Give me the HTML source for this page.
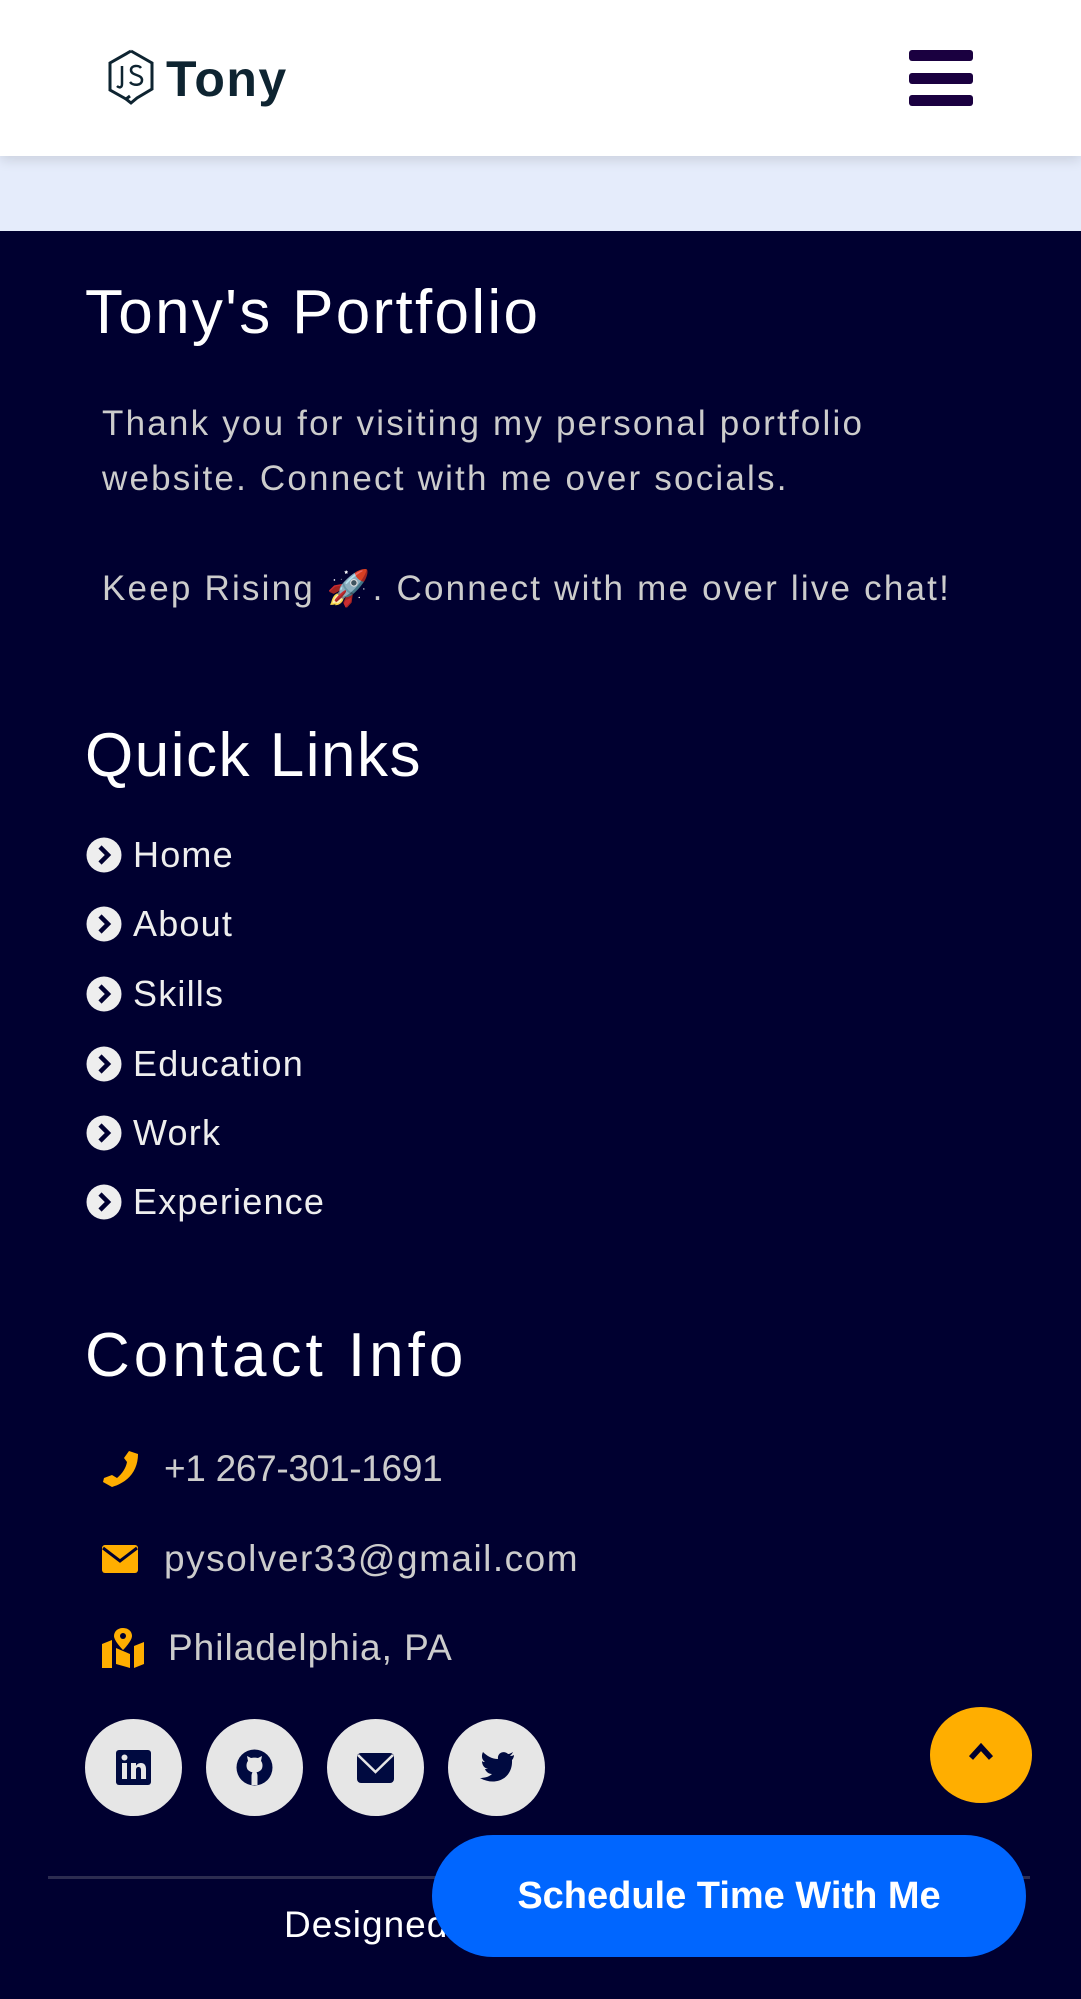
<!DOCTYPE html>
<html><head><meta charset="utf-8"><style>
*{margin:0;padding:0;box-sizing:border-box}
body{width:1081px;height:1999px;overflow:hidden;background:#000030;font-family:"Liberation Sans",sans-serif;position:relative}
.hdr{position:absolute;left:0;top:0;width:1081px;height:156px;background:#fff;box-shadow:0 4px 12px rgba(0,0,0,.12);z-index:2}
.band{position:absolute;left:0;top:156px;width:1081px;height:75px;background:#e5ecfb}
.abs{position:absolute}
h2{position:absolute;left:85px;color:#fff;font-weight:normal;font-size:62px;line-height:1;letter-spacing:1.5px;white-space:nowrap}
p.t{position:absolute;left:102px;color:#ccc;font-size:35px;line-height:55px;width:970px;letter-spacing:2.2px;white-space:nowrap}
.ql{position:absolute;left:86px;color:#eee;font-size:36px;height:36px;line-height:36px;letter-spacing:1.2px}
.ql svg{position:absolute;left:0;top:0}
.ql span{position:absolute;left:47px;white-space:nowrap}
.ci{position:absolute;left:102px;color:#ccc;font-size:37px;line-height:40px;height:40px;letter-spacing:1px}
.ci span{position:absolute;white-space:nowrap;top:0}
.soc{position:absolute;top:1719px;width:97px;height:97px;border-radius:50%;background:#e6e6e6}
.soc svg{position:absolute;left:28px;top:28px}
</style></head><body>
<div class="hdr">
<svg class="abs" style="left:106px;top:48px" width="50" height="60" viewBox="0 0 50 60"><path d="M25 3 L46 15 L46 41 L31 50 L25 55 L20 51 L24 48" fill="none" stroke="#0e2431" stroke-width="3"/><path d="M20 51 L4 42 L4 15 L25 3" fill="none" stroke="#0e2431" stroke-width="3"/><path d="M16 18 V36 C16 40 13 40 11 38" fill="none" stroke="#0e2431" stroke-width="2.5"/><path d="M35 20 C33 17 25 17 25 22 C25 28 36 26 36 32 C36 38 27 38 24 34" fill="none" stroke="#0e2431" stroke-width="2.5"/></svg>
<div class="abs" style="left:166px;top:50px;font-size:50px;font-weight:bold;color:#0e2431;letter-spacing:1.5px">Tony</div>
<div class="abs" style="left:909px;top:50px;width:64px;height:11px;border-radius:3px;background:#1a0040"></div>
<div class="abs" style="left:909px;top:73px;width:64px;height:11px;border-radius:3px;background:#1a0040"></div>
<div class="abs" style="left:909px;top:95px;width:64px;height:11px;border-radius:3px;background:#1a0040"></div>
</div>
<div class="band"></div>
<h2 style="top:282px;letter-spacing:2.3px">Tony's Portfolio</h2>
<p class="t" style="top:396px">Thank you for visiting my personal portfolio<br>website. Connect with me over socials.</p>
<p class="t" style="top:561px">Keep Rising 🚀. Connect with me over live chat!</p>
<h2 style="top:725px">Quick Links</h2>
<div class="ql" style="top:837px"><svg width="36" height="36" viewBox="0 0 36 36"><circle cx="18" cy="18" r="17.5" fill="#eee"/><path d="M14 10 L22 18 L14 26" fill="none" stroke="#000030" stroke-width="4.5"/></svg><span>Home</span></div>
<div class="ql" style="top:906px"><svg width="36" height="36" viewBox="0 0 36 36"><circle cx="18" cy="18" r="17.5" fill="#eee"/><path d="M14 10 L22 18 L14 26" fill="none" stroke="#000030" stroke-width="4.5"/></svg><span>About</span></div>
<div class="ql" style="top:976px"><svg width="36" height="36" viewBox="0 0 36 36"><circle cx="18" cy="18" r="17.5" fill="#eee"/><path d="M14 10 L22 18 L14 26" fill="none" stroke="#000030" stroke-width="4.5"/></svg><span>Skills</span></div>
<div class="ql" style="top:1046px"><svg width="36" height="36" viewBox="0 0 36 36"><circle cx="18" cy="18" r="17.5" fill="#eee"/><path d="M14 10 L22 18 L14 26" fill="none" stroke="#000030" stroke-width="4.5"/></svg><span>Education</span></div>
<div class="ql" style="top:1115px"><svg width="36" height="36" viewBox="0 0 36 36"><circle cx="18" cy="18" r="17.5" fill="#eee"/><path d="M14 10 L22 18 L14 26" fill="none" stroke="#000030" stroke-width="4.5"/></svg><span>Work</span></div>
<div class="ql" style="top:1184px"><svg width="36" height="36" viewBox="0 0 36 36"><circle cx="18" cy="18" r="17.5" fill="#eee"/><path d="M14 10 L22 18 L14 26" fill="none" stroke="#000030" stroke-width="4.5"/></svg><span>Experience</span></div>
<h2 style="top:1325px;letter-spacing:4px">Contact Info</h2>
<div class="ci" style="top:1449px"><svg class="abs" style="left:0;top:1px" width="37" height="37" viewBox="0 0 37 37"><path d="M27 1 L36 4 C36 20 27 32 10 37 L1 32 L2 28 L10 25 L15 28 C20 24 24 18 25 12 L22 8 Z" fill="#ffae00"/></svg><span style="left:62px;letter-spacing:-0.3px">+1 267-301-1691</span></div>
<div class="ci" style="top:1539px"><svg class="abs" style="left:0;top:6px" width="36" height="28" viewBox="0 0 36 28"><rect x="0" y="0" width="36" height="28" rx="3" fill="#ffae00"/><path d="M1 3 L18 16 L35 3" fill="none" stroke="#000030" stroke-width="3"/></svg><span style="left:62px;letter-spacing:1.5px">pysolver33@gmail.com</span></div>
<div class="ci" style="top:1628px"><svg class="abs" style="left:0;top:0" width="42" height="40" viewBox="0 0 42 40"><path d="M0 16 L10 12 L10 40 L0 40 Z M14 20 L28 26 L28 40 L14 36 Z M32 18 L42 14 L42 36 L32 40 Z" fill="#ffae00"/><path d="M21 0 C15 0 12 4 12 8 C12 13 21 22 21 22 C21 22 30 13 30 8 C30 4 27 0 21 0 Z" fill="#ffae00"/><circle cx="21" cy="8" r="3" fill="#000030"/></svg><span style="left:66px">Philadelphia, PA</span></div>
<div class="soc" style="left:85px"><svg width="41" height="41" viewBox="0 0 41 41"><rect x="3" y="3" width="35" height="35" rx="3" fill="#000a40"/><rect x="9" y="16" width="5" height="16" fill="#e6e6e6"/><circle cx="11.5" cy="10.5" r="3" fill="#e6e6e6"/><path d="M18 16 H23 V19 C24 17 26 16 28 16 C31 16 33 18 33 22 V32 H28 V23 C28 21 27 20 25.5 20 C24 20 23 21 23 23 V32 H18 Z" fill="#e6e6e6"/></svg></div>
<div class="soc" style="left:206px"><svg width="41" height="41" viewBox="0 0 41 41"><circle cx="20.5" cy="20.5" r="18" fill="#000a40"/><path d="M14 14 L13 9 L17 11 C19 10.5 22 10.5 24 11 L28 9 L27 14 C29 16 29 21 27 23 C25 25 23 25 22.5 25.5 C23.5 27 23.5 28 23.5 30 V38 H17.5 V30 C17.5 28 17.5 27 18.5 25.5 C18 25 16 25 14 23 C12 21 12 16 14 14 Z" fill="#e6e6e6"/></svg></div>
<div class="soc" style="left:327px"><svg width="41" height="41" viewBox="0 0 41 41"><rect x="2" y="6" width="37" height="30" rx="4" fill="#000a40"/><path d="M3 8 L20.5 25 L38 8" fill="none" stroke="#e6e6e6" stroke-width="2.5"/></svg></div>
<div class="soc" style="left:448px"><svg width="41" height="41" viewBox="0 0 41 41"><path d="M38 8 C36 9 35 9 34 9 C35 8 36 7 37 5 C35 6 34 7 32 7 C28 3 21 6 22 12 C16 12 11 9 7 5 C5 9 6 13 9 15 C8 15 7 15 6 14 C6 18 8 21 12 22 C11 22 10 22 9 22 C10 25 13 27 16 27 C13 30 8 31 4 31 C20 40 37 31 36 13 C37 12 38 10 38 8 Z" fill="#000a40"/></svg></div>
<div class="abs" style="left:930px;top:1707px;width:102px;height:96px;border-radius:50%;background:#ffae00"><svg class="abs" style="left:36px;top:32px" width="30" height="24" viewBox="0 0 30 24"><path d="M5 19 L15 8 L25 19" fill="none" stroke="#000030" stroke-width="5.5"/></svg></div>
<div class="abs" style="left:48px;top:1876px;width:982px;height:3px;background:#2c2c50"></div>
<div class="abs" style="left:284px;top:1904px;color:#fff;font-size:37px;letter-spacing:1px">Designed</div>
<div class="abs" style="left:432px;top:1835px;width:594px;height:122px;border-radius:61px;background:#0066ff;color:#fff;font-weight:bold;font-size:38px;line-height:122px;text-align:center">Schedule Time With Me</div>
</body></html>
